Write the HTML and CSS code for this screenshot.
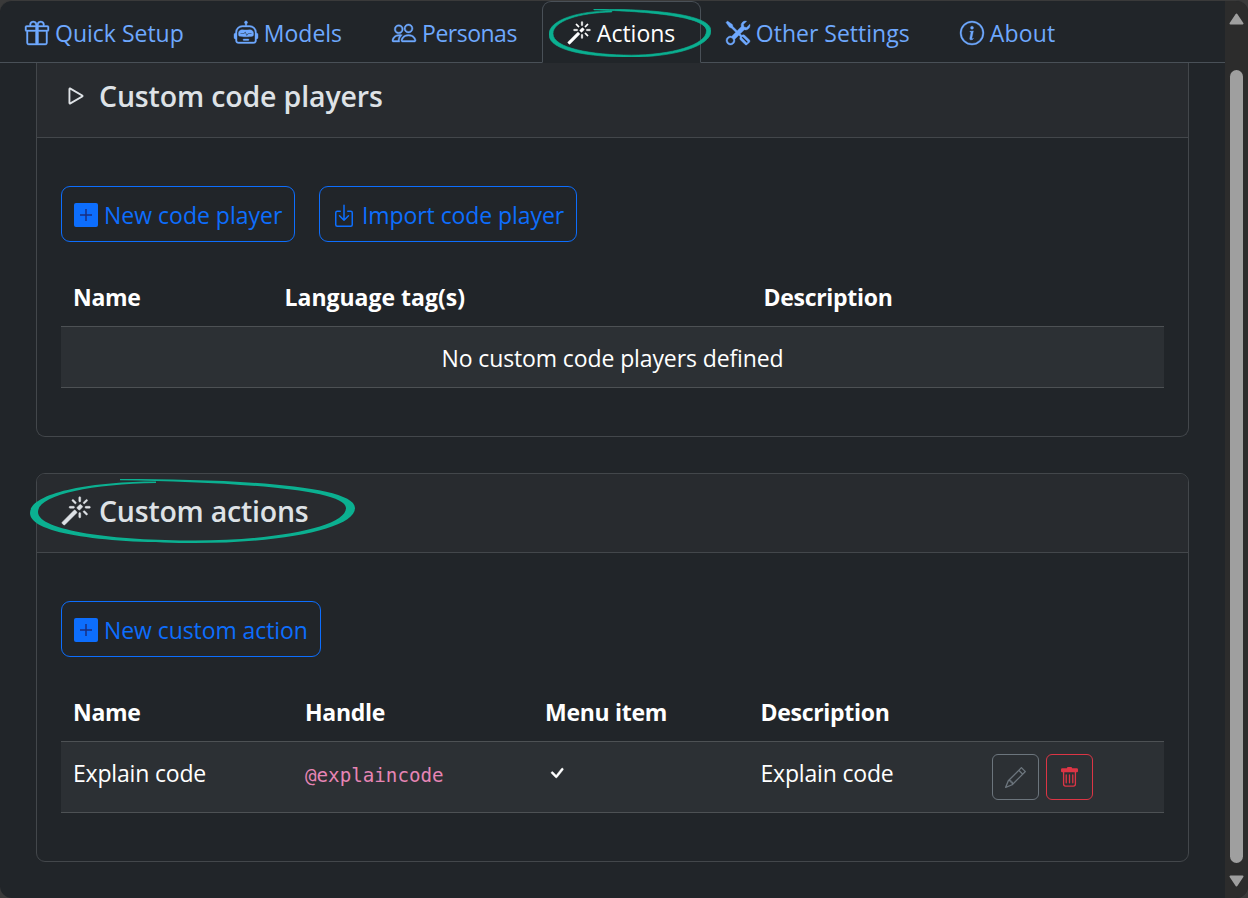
FILE: index.html
```html
<!DOCTYPE html>
<html lang="en">
<head>
<meta charset="utf-8">
<title>Actions</title>
<link rel="stylesheet" href="styles.css">
</head>
<body>
<svg class="defs" width="0" height="0">
  <symbol id="magic" viewBox="0 0 16 16"><path d="M9.5 2.672a.5.5 0 1 0 1 0V.843a.5.5 0 0 0-1 0v1.829Zm4.5.035A.5.5 0 0 0 13.293 2L12 3.293a.5.5 0 1 0 .707.707L14 2.707ZM7.293 4A.5.5 0 1 0 8 3.293L6.707 2A.5.5 0 0 0 6 2.707L7.293 4Zm-.621 2.5a.5.5 0 1 0 0-1H4.843a.5.5 0 1 0 0 1h1.829Zm8.485 0a.5.5 0 1 0 0-1h-1.829a.5.5 0 0 0 0 1h1.829ZM13.293 10A.5.5 0 1 0 14 9.293L12.707 8a.5.5 0 1 0-.707.707L13.293 10ZM9.5 11.157a.5.5 0 0 0 1 0V9.328a.5.5 0 0 0-1 0v1.829Zm1.854-5.097a.5.5 0 0 0 0-.706l-.708-.708a.5.5 0 0 0-.707 0L8.646 5.94a.5.5 0 0 0 0 .707l.708.708a.5.5 0 0 0 .707 0l1.293-1.293Zm-3 3a.5.5 0 0 0 0-.706l-.708-.708a.5.5 0 0 0-.707 0L.646 13.94a.5.5 0 0 0 0 .707l.707.707a.5.5 0 0 0 .707 0L8.354 9.06Z"/></symbol>
  <symbol id="plus" viewBox="0 0 24 24"><rect width="24" height="24" rx="2"/><path class="plus-mark" d="M12 6v12M6 12h12"/></symbol>
  <symbol id="ring" viewBox="0 0 325 64" preserveAspectRatio="none"><path d="M90 0C200 0 325 6 325 29C325 50 250 64 165 64C80 64 0 56 0 34C0 14 60 2.500 126 2.500L126 4C60 5 8 16 8 33C8 52 85 61.500 165 61.500C245 61.500 316 48 316 29C316 10 200 3 90 1.200Z"/></symbol>
</svg>
<div class="window">
  <div class="main">
    <nav class="tabs">
      <a class="tab"><svg class="icon" viewBox="0 0 16 16"><path d="M3 2.500a2.500 2.500 0 0 1 5 0 2.500 2.500 0 0 1 5 0v.006c0 .07 0 .27-.038.494H15a1 1 0 0 1 1 1v2a1 1 0 0 1-1 1v7.500a1.500 1.500 0 0 1-1.500 1.500h-11A1.500 1.500 0 0 1 1 14.500V7a1 1 0 0 1-1-1V4a1 1 0 0 1 1-1h2.038A2.968 2.968 0 0 1 3 2.506V2.500zm1.068.5H7v-.5a1.500 1.500 0 1 0-3 0c0 .085.002.274.045.43a.522.522 0 0 0 .023.07zM9 3h2.932a.56.56 0 0 0 .023-.07c.043-.156.045-.345.045-.43a1.500 1.500 0 0 0-3 0V3zM1 4v2h6V4H1zm8 0v2h6V4H9zm5 3H9v8h4.500a.5.5 0 0 0 .5-.5V7zm-7 8V7H2v7.500a.5.5 0 0 0 .5.5H7z"/></svg><span>Quick Setup</span></a>
      <a class="tab"><svg class="icon" viewBox="0 0 16 16"><path d="M6 12.500a.5.5 0 0 1 .5-.5h3a.5.5 0 0 1 0 1h-3a.5.5 0 0 1-.5-.5ZM3 8.062C3 6.760 4.235 5.765 5.530 5.886a26.580 26.580 0 0 0 4.940 0C11.765 5.765 13 6.760 13 8.062v1.157a.933.933 0 0 1-.765.935c-.845.147-2.340.346-4.235.346-1.895 0-3.390-.2-4.235-.346A.933.933 0 0 1 3 9.219V8.062Zm4.542-.827a.25.25 0 0 0-.217.068l-.92.9a24.767 24.767 0 0 1-1.871-.183.25.25 0 0 0-.068.495c.55.076 1.232.149 2.020.193a.25.25 0 0 0 .189-.071l.754-.736.847 1.710a.25.25 0 0 0 .404.062l.932-.97a25.286 25.286 0 0 0 1.922-.188.25.25 0 0 0-.068-.495c-.538.074-1.207.145-1.980.189a.25.25 0 0 0-.166.076l-.754.785-.842-1.700a.25.25 0 0 0-.182-.135Z"/><path d="M8.500 1.866a1 1 0 1 0-1 0V3h-2A4.500 4.500 0 0 0 1 7.500V8a1 1 0 0 0-1 1v2a1 1 0 0 0 1 1v1a2 2 0 0 0 2 2h10a2 2 0 0 0 2-2v-1a1 1 0 0 0 1-1V9a1 1 0 0 0-1-1v-.5A4.500 4.500 0 0 0 10.500 3h-2V1.866ZM14 7.500V13a1 1 0 0 1-1 1H3a1 1 0 0 1-1-1V7.500A3.500 3.500 0 0 1 5.500 4h5A3.500 3.500 0 0 1 14 7.500Z"/></svg><span>Models</span></a>
      <a class="tab personas"><svg class="icon" viewBox="0 0 16 16"><path d="M15 14s1 0 1-1-1-4-5-4-5 3-5 4 1 1 1 1h8Zm-7.978-1A.261.261 0 0 1 7 12.996c.001-.264.167-1.030.76-1.720C8.312 10.629 9.282 10 11 10c1.717 0 2.687.63 3.240 1.276.593.69.758 1.457.76 1.720l-.008.002a.274.274 0 0 1-.014.002H7.022ZM11 7a2 2 0 1 0 0-4 2 2 0 0 0 0 4Zm3-2a3 3 0 1 1-6 0 3 3 0 0 1 6 0ZM6.936 9.280a5.880 5.880 0 0 0-1.230-.247A7.350 7.350 0 0 0 5 9c-4 0-5 3-5 4 0 .667.333 1 1 1h4.216A2.238 2.238 0 0 1 5 13c0-1.010.377-2.042 1.090-2.904.243-.294.526-.569.846-.816ZM4.920 10A5.493 5.493 0 0 0 4 13H1c0-.26.164-1.030.76-1.724.545-.636 1.492-1.256 3.160-1.275ZM1.500 5.500a3 3 0 1 1 6 0 3 3 0 0 1-6 0Zm3-2a2 2 0 1 0 0 4 2 2 0 0 0 0-4Z"/></svg><span>Personas</span></a>
      <a class="tab active"><svg class="icon"><use href="#magic"/></svg><span>Actions</span><svg class="ring ring-tab"><use href="#ring"/></svg></a>
      <a class="tab"><svg class="icon" viewBox="0 0 16 16"><path d="M1 0 0 1l2.200 3.081a1 1 0 0 0 .815.419h.07a1 1 0 0 1 .708.293l2.675 2.675-2.617 2.654A3.003 3.003 0 0 0 0 13a3 3 0 1 0 5.878-.851l2.654-2.617.968.968-.305.914a1 1 0 0 0 .242 1.023l3.270 3.270a.997.997 0 0 0 1.414 0l1.586-1.586a.997.997 0 0 0 0-1.414l-3.270-3.270a1 1 0 0 0-1.023-.242L10.500 9.500l-.96-.96 2.680-2.643A3.005 3.005 0 0 0 16 3c0-.269-.035-.53-.102-.777l-2.140 2.141L12 4l-.364-1.757L13.777.102a3 3 0 0 0-3.675 3.680L7.462 6.460 4.793 3.793a1 1 0 0 1-.293-.707v-.071a1 1 0 0 0-.419-.814L1 0Zm9.646 10.646a.5.5 0 0 1 .708 0l2.914 2.915a.5.5 0 0 1-.707.707l-2.915-2.914a.5.5 0 0 1 0-.708ZM3 11l.471.242.529.026.287.445.445.287.026.529L5 13l-.242.471-.026.529-.445.287-.287.445-.529.026L3 15l-.471-.242L2 14.732l-.287-.445L1.268 14l-.026-.529L1 13l.242-.471.026-.529.445-.287.287-.445.529-.026L3 11Z"/></svg><span>Other Settings</span></a>
      <a class="tab about"><svg class="icon" viewBox="0 0 16 16"><path d="M8 15A7 7 0 1 1 8 1a7 7 0 0 1 0 14zm0 1A8 8 0 1 0 8 0a8 8 0 0 0 0 16z"/><path d="m8.930 6.588-2.290.287-.082.38.45.083c.294.07.352.176.288.469l-.738 3.468c-.194.897.105 1.319.808 1.319.545 0 1.178-.252 1.465-.598l.088-.416c-.2.176-.492.246-.686.246-.275 0-.375-.193-.304-.533L8.930 6.588zM9 4.500a1 1 0 1 1-2 0 1 1 0 0 1 2 0z"/></svg><span>About</span></a>
    </nav>

    <div class="content">
      <section class="card card-players">
        <h2 class="card-header"><svg class="icon" viewBox="0 0 16 16"><path d="M10.804 8 5 4.633v6.734L10.804 8zm.792-.696a.802.802 0 0 1 0 1.392l-6.363 3.692C4.713 12.690 4 12.345 4 11.692V4.308c0-.653.713-.998 1.233-.696l6.363 3.692z"/></svg><span>Custom code players</span></h2>
        <div class="card-body">
          <div class="buttons">
            <button class="btn w-new"><svg class="icon"><use href="#plus"/></svg><span>New code player</span></button>
            <button class="btn w-import"><svg class="icon" viewBox="0 0 16 16"><path d="M3.500 6a.5.5 0 0 0-.5.5v8a.5.5 0 0 0 .5.5h9a.5.5 0 0 0 .5-.5v-8a.5.5 0 0 0-.5-.5h-2a.5.5 0 0 1 0-1h2A1.500 1.500 0 0 1 14 6.500v8a1.500 1.500 0 0 1-1.500 1.500h-9A1.500 1.500 0 0 1 2 14.500v-8A1.500 1.500 0 0 1 3.500 5h2a.5.5 0 0 1 0 1h-2z"/><path d="M7.646 11.854a.5.5 0 0 0 .708 0l3-3a.5.5 0 0 0-.708-.708L8.500 10.293V1.500a.5.5 0 0 0-1 0v8.793L5.354 8.146a.5.5 0 1 0-.708.708l3 3z"/></svg><span>Import code player</span></button>
          </div>
          <div class="table">
            <div class="row head players"><span>Name</span><span class="wide">Language tag(s)</span><span>Description</span></div>
            <div class="row empty"><span>No custom code players defined</span></div>
          </div>
        </div>
      </section>

      <section class="card card-actions">
        <h2 class="card-header"><svg class="icon"><use href="#magic"/></svg><span>Custom actions</span><svg class="ring ring-header"><use href="#ring"/></svg></h2>
        <div class="card-body">
          <div class="buttons">
            <button class="btn w-action"><svg class="icon"><use href="#plus"/></svg><span>New custom action</span></button>
          </div>
          <div class="table">
            <div class="row head actions"><span>Name</span><span>Handle</span><span>Menu item</span><span>Description</span></div>
            <div class="row item actions">
              <span>Explain code</span>
              <code>@explaincode</code>
              <svg class="icon check" viewBox="0 0 16 16"><path d="M10.970 4.970a.75.75 0 0 1 1.070 1.050l-3.990 4.990a.75.75 0 0 1-1.080.02L4.324 8.384a.75.75 0 1 1 1.060-1.060l2.094 2.093 3.473-4.425a.267.267 0 0 1 .02-.022z"/></svg>
              <span>Explain code</span>
              <div class="tools">
                <button class="tool edit"><svg viewBox="0 0 16 16"><path d="M12.146.146a.5.5 0 0 1 .708 0l3 3a.5.5 0 0 1 0 .708l-10 10a.5.5 0 0 1-.168.11l-5 2a.5.5 0 0 1-.65-.65l2-5a.5.5 0 0 1 .11-.168l10-10zM11.207 2.500 13.500 4.793 14.793 3.500 12.500 1.207 11.207 2.500zm1.586 3L10.500 3.207 4 9.707V10h.5a.5.5 0 0 1 .5.5v.5h.5a.5.5 0 0 1 .5.5v.5h.293l6.500-6.500zm-9.761 5.175-.106.106-1.528 3.821 3.821-1.528.106-.106A.5.5 0 0 1 5 12.500V12h-.5a.5.5 0 0 1-.5-.5V11h-.5a.5.5 0 0 1-.468-.325z"/></svg></button>
                <button class="tool delete"><svg viewBox="0 0 16 16"><path d="M5.500 5.500A.5.5 0 0 1 6 6v6a.5.5 0 0 1-1 0V6a.5.5 0 0 1 .5-.5zm2.500 0a.5.5 0 0 1 .5.5v6a.5.5 0 0 1-1 0V6a.5.5 0 0 1 .5-.5zm3 .5a.5.5 0 0 0-1 0v6a.5.5 0 0 0 1 0V6z"/><path d="M14.500 3a1 1 0 0 1-1 1H13v9a2 2 0 0 1-2 2H5a2 2 0 0 1-2-2V4h-.5a1 1 0 0 1-1-1V2a1 1 0 0 1 1-1H6a1 1 0 0 1 1-1h2a1 1 0 0 1 1 1h3.500a1 1 0 0 1 1 1v1zM4.118 4 4 4.059V13a1 1 0 0 0 1 1h6a1 1 0 0 0 1-1V4.059L11.882 4H4.118zM2.500 3V2h11v1h-11z"/></svg></button>
              </div>
            </div>
          </div>
        </div>
      </section>
    </div>
  </div>
  <div class="scrollbar">
    <svg class="arrow" viewBox="0 0 15 12"><path d="M7.500 1.500 13.500 10.500H1.500Z"/></svg>
    <div class="thumb"></div>
    <svg class="arrow" viewBox="0 0 15 12"><path d="M7.500 10.500 1.500 1.500H13.500Z"/></svg>
  </div>
</div>
</body>
</html>
```
FILE: styles.css
```css
* { box-sizing: border-box; }

body {
  margin: 0;
  height: 898px;
  overflow: hidden;
  background: #3a3a3a;
  color: #fff;
  font: 23px/36px "Open Sans", "Noto Sans", sans-serif;
}

.defs { position: absolute; }

.window {
  display: flex;
  height: 898px;
  border-top: 1px solid #3a3a3a;
  border-radius: 12px;
  background: #212529;
  overflow: hidden;
}

.main {
  width: 1225px;
  display: flex;
  flex-direction: column;
}

.icon {
  flex: none;
  width: 24px;
  height: 24px;
  fill: currentColor;
}

/* Tab bar */
.tabs {
  display: flex;
  height: 62px;
  border-bottom: 1px solid #495057;
}

.tab {
  position: relative;
  display: flex;
  align-items: center;
  gap: 6px;
  height: 62px;
  padding: 2px 25px 0 25px;
  color: #6ea8fe;
  white-space: nowrap;
}

.tab .icon,
.card-actions .card-header .icon,
.check {
  stroke: currentColor;
  stroke-width: 0.25;
  overflow: visible;
}

.tab.personas { letter-spacing: -0.5px; }
.tab.about { letter-spacing: 0.2px; }

.tab.active {
  width: 159px;
  padding-left: 24px;
  border: 1px solid #495057;
  border-bottom-color: #212529;
  border-radius: 9px 9px 0 0;
  background: #212529;
  color: #fff;
}

.ring {
  position: absolute;
  z-index: 1;
  fill: #0bb091;
  pointer-events: none;
}

.ring-tab {
  left: 6px;
  top: 7px;
  width: 162px;
  height: 48px;
  stroke: #0bb091;
  stroke-width: 1;
}

.ring-header { left: -7px; top: 5px; width: 325px; height: 64px; }

/* Cards */
.content { padding: 0 36px; }

.card {
  border: 1px solid #43474b;
  border-radius: 9px;
}

.card-players { border-top: 0; border-radius: 0 0 9px 9px; height: 374px; }
.card-actions { margin-top: 36px; height: 389px; }

.card-header {
  position: relative;
  display: flex;
  align-items: center;
  gap: 8px;
  height: 79px;
  margin: 0;
  padding: 0 24px;
  border-bottom: 1px solid #43474b;
  background: #282b2f;
  color: #dee2e6;
  font-size: 28.5px;
  font-weight: 600;
  letter-spacing: -0.15px;
}

.card-players .card-header { height: 75px; padding-bottom: 8px; }

.card-actions .card-header {
  border-radius: 8px 8px 0 0;
  padding-bottom: 4px;
  letter-spacing: -0.22px;
}

.card-header .icon { width: 30px; height: 30px; }

.card-body { padding: 48px 24px; }

.buttons { display: flex; gap: 24px; margin-bottom: 24px; }

.btn {
  display: flex;
  align-items: center;
  gap: 6px;
  height: 56px;
  padding: 1px 12px 0;
  border: 1px solid #0d6efd;
  border-radius: 9px;
  background: none;
  color: #0d6efd;
  font: inherit;
  white-space: nowrap;
}

.btn .icon { margin-top: 1px; }
.w-new { width: 234px; }
.w-import { width: 258px; letter-spacing: -0.08px; }
.w-action { width: 260px; letter-spacing: -0.08px; }
.plus-mark { fill: none; stroke: #1a2f80; stroke-width: 1.5; }

/* Tables */
.row {
  display: grid;
  align-items: center;
  height: 61px;
  padding: 1px 12px 0;
  border-bottom: 1px solid #4d5154;
  letter-spacing: -0.18px;
}

.head { font-weight: 700; letter-spacing: -0.3px; }
.head .wide { letter-spacing: 0; }
.players { grid-template-columns: 211.500px 479px 1fr; }
.actions { grid-template-columns: 232px 240px 215.500px 231.500px 1fr; }
.empty, .item { background: #2c3034; }
.empty { justify-content: center; letter-spacing: -0.11px; }

.item {
  align-items: start;
  height: 71px;
  padding-top: 12px;
}

.item > span { padding-top: 1px; }

.item code {
  padding-top: 4px;
  color: #e685b5;
  font: 19.200px/36px "DejaVu Sans Mono", monospace;
  letter-spacing: 0;
}

.check { margin-top: 7px; }

.tools { display: flex; gap: 7px; }

.tool {
  display: flex;
  align-items: center;
  justify-content: center;
  width: 47px;
  height: 46px;
  padding: 0;
  border: 1px solid currentColor;
  border-radius: 6px;
  background: none;
}

.tool svg { width: 21px; height: 21px; fill: currentColor; }
.edit { color: #6c757d; }
.delete { color: #dc3545; }

/* Scrollbar */
.scrollbar {
  display: flex;
  flex-direction: column;
  align-items: center;
  width: 23px;
  padding: 12px 0 10px;
  background: #2c2c2c;
}

.arrow {
  width: 15px;
  height: 12px;
  fill: #9f9f9f;
  stroke: #9f9f9f;
  stroke-width: 2;
  stroke-linejoin: round;
}

.thumb {
  width: 13px;
  height: 793px;
  margin: 45px 0 12px;
  border-radius: 7px;
  background: #9f9f9f;
}
```
